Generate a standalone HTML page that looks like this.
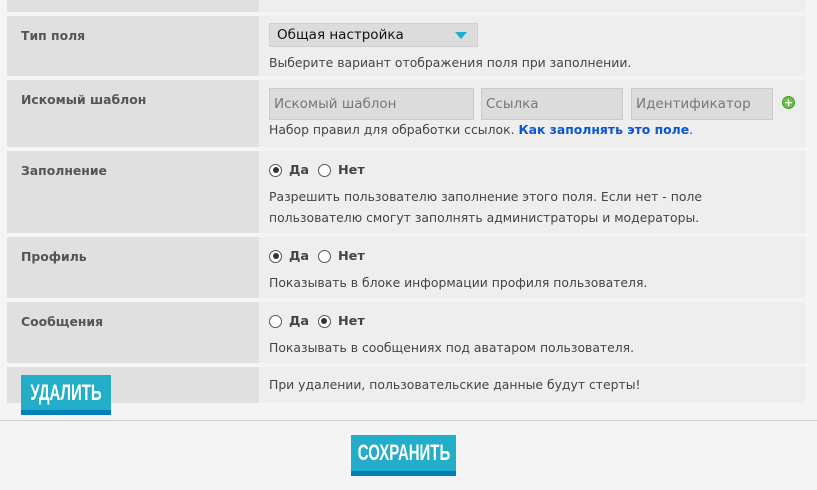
<!DOCTYPE html>
<html><head><meta charset="utf-8"><style>
*{box-sizing:border-box;margin:0;padding:0}
body{width:817px;height:490px;background:#f4f4f4;font-family:"DejaVu Sans","Liberation Sans",sans-serif;font-size:12.4px;color:#444;position:relative;overflow:hidden}
.row{position:absolute;left:7px;width:799px;display:flex}
.lab{width:252px;background:#dfe0df;padding:12px 14px;font-weight:bold;color:#555;font-size:12.4px}
.val{flex:1;background:#eeeeee;padding:7px 10px;position:relative}
.sel{width:209px;height:24px;background:#dcdcdc;border:1px solid #d0d0d0;color:#111;font-size:13.5px;padding:3px 7px;position:relative}
.sel:after{content:"";position:absolute;right:10px;top:8px;border-left:6px solid transparent;border-right:6px solid transparent;border-top:7px solid #1ab0c8}
.inp{position:absolute;top:8px;height:32px;background:#dcdcdc;border:1px solid #ccc;color:#777;font-size:13.5px;padding:7px 4px}
.help{margin-top:7px;line-height:21px}
.radio{display:flex;align-items:center;font-weight:bold;color:#444;font-size:12.8px;height:24px}
.rb{width:13px;height:13px;border:1px solid #555;border-radius:50%;background:#fff;display:inline-block;margin-right:7px;position:relative}
.rb.on:after{content:"";position:absolute;left:2.5px;top:2.5px;width:6px;height:6px;border-radius:50%;background:#333}
.btn{position:absolute;background:#22aec8;border-bottom:5px solid #0080b8;color:#fff;font-family:"Liberation Sans",sans-serif;font-weight:bold;font-size:22px;line-height:36px}
.btn span{position:absolute;left:50%;top:0;white-space:nowrap;transform:translateX(-50%) scaleX(0.68)}
</style></head><body>
<div class="row" style="top:-20px;height:32px"><div class="lab"></div><div class="val"></div></div>
<div class="row" style="top:16px;height:60px"><div class="lab">Тип поля</div><div class="val"><div class="sel">Общая настройка</div><div class="help" style="margin-top:5px">Выберите вариант отображения поля при заполнении.</div></div></div>
<div class="row" style="top:80px;height:67px"><div class="lab">Искомый шаблон</div><div class="val">
<div class="inp" style="left:10px;width:205px">Искомый шаблон</div>
<div class="inp" style="left:222px;width:142px">Ссылка</div>
<div class="inp" style="left:372px;width:142px">Идентификатор</div>
<div style="position:absolute;left:523px;top:16px;width:13px;height:13px;border-radius:50%;background:#6cbf4a;border:1px solid #4a9a30;color:#fff;font-size:11px;line-height:11px;text-align:center;font-weight:bold">+</div>
<div class="help" style="position:absolute;top:39px;left:10px;margin:0">Набор правил для обработки ссылок. <b style="color:#0a55d0">Как заполнять это поле</b>.</div>
</div></div>
<div class="row" style="top:151px;height:82px"><div class="lab">Заполнение</div><div class="val"><div class="radio"><span class="rb on"></span>Да&nbsp;&nbsp;<span class="rb"></span>Нет</div><div class="help" style="margin-top:4px">Разрешить пользователю заполнение этого поля. Если нет - поле<br>пользователю смогут заполнять администраторы и модераторы.</div></div></div>
<div class="row" style="top:237px;height:61px"><div class="lab">Профиль</div><div class="val"><div class="radio"><span class="rb on"></span>Да&nbsp;&nbsp;<span class="rb"></span>Нет</div><div class="help" style="margin-top:4px">Показывать в блоке информации профиля пользователя.</div></div></div>
<div class="row" style="top:302px;height:61px"><div class="lab">Сообщения</div><div class="val"><div class="radio"><span class="rb"></span>Да&nbsp;&nbsp;<span class="rb on"></span>Нет</div><div class="help" style="margin-top:4px">Показывать в сообщениях под аватаром пользователя.</div></div></div>
<div class="row" style="top:367px;height:36px"><div class="lab"></div><div class="val" style="padding-top:10px">При удалении, пользовательские данные будут стерты!</div></div>
<div class="btn" style="left:21px;top:375px;width:90px;height:40px"><span>УДАЛИТЬ</span></div>
<div style="position:absolute;left:0;top:420px;width:817px;height:1px;background:#cccccc"></div>
<div class="btn" style="left:351px;top:435px;width:105px;height:41px"><span>СОХРАНИТЬ</span></div>
</body></html>
